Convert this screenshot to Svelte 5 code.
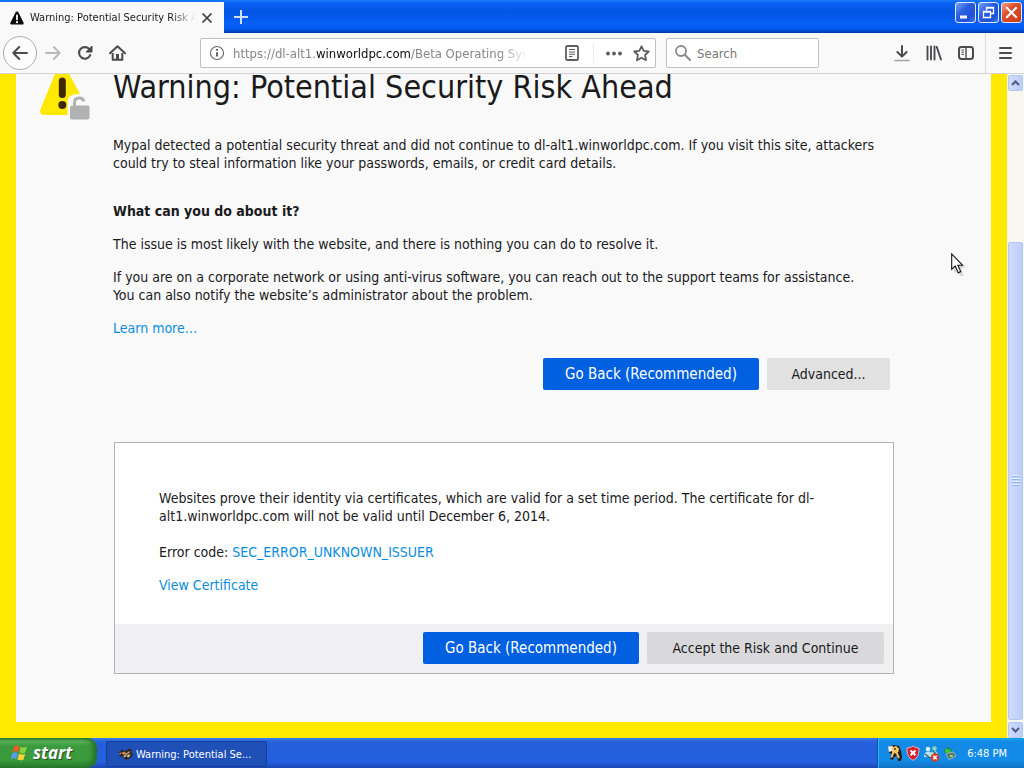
<script>
  const address = {
    before: 'https://dl-alt1.',
    domain: 'winworldpc.com',
    after: '/Beta Operating Systems'
  };
  let editing = $state(false);
  let query = $state('');
</script>

<div class="desktop">
  <header class="titlebar">
    <div class="tab">
      <svg width="14" height="14" viewBox="0 0 14 14" aria-hidden="true">
        <path d="M7 0.5C7.8 0.5 8.2 1 8.6 1.7L13.5 11.4C14 12.6 13.6 13.6 12.2 13.6H1.8C0.4 13.6 0 12.6 0.5 11.4L5.4 1.7C5.8 1 6.2 0.5 7 0.5Z" fill="#0c0c0d" />
        <path d="M7 4.4V8.4" stroke="#fff" stroke-width="1.8" stroke-linecap="round" />
        <circle cx="7" cy="11.2" r="1.1" fill="#fff" />
      </svg>
      <span class="tab-title">Warning: Potential Security Risk Ahead</span>
      <button class="tab-close" aria-label="Close tab">
        <svg width="12" height="12" viewBox="0 0 12 12"><path d="M1.5 1.5L10.5 10.5M10.5 1.5L1.5 10.5" stroke="#3c3c3e" stroke-width="1.7" /></svg>
      </button>
    </div>
    <button class="new-tab" aria-label="New tab">
      <svg width="14" height="14" viewBox="0 0 14 14"><path d="M7 0V14M0 7H14" stroke="#cfe0ff" stroke-width="2" /></svg>
    </button>
    <div class="window-buttons">
      <button class="win" aria-label="Minimize">
        <svg width="19" height="19" viewBox="0 0 19 19"><path d="M4 12.5H11V15.5H4Z" fill="#fff" /></svg>
      </button>
      <button class="win" aria-label="Restore">
        <svg width="19" height="19" viewBox="0 0 19 19"><path d="M7.5 7.5V4.5H14.5V10.5H11.5M7 5H15M4.5 8.5H11.5V14.5H4.5ZM4 9H12" fill="none" stroke="#fff" stroke-width="1.3" /></svg>
      </button>
      <button class="win close" aria-label="Close">
        <svg width="19" height="19" viewBox="0 0 19 19"><path d="M5 5L14 14M14 5L5 14" stroke="#fff" stroke-width="2.1" stroke-linecap="square" /></svg>
      </button>
    </div>
  </header>

  <nav class="toolbar">
    <button class="back" aria-label="Back">
      <svg width="16" height="14" viewBox="0 0 16 14"><path d="M7.2 1L1.3 7L7.2 13M1.5 7H15" fill="none" stroke="#4a4a4f" stroke-width="2" stroke-linecap="round" stroke-linejoin="round" /></svg>
    </button>
    <button class="tool" aria-label="Forward">
      <svg width="16" height="14" viewBox="0 0 16 14"><path d="M8.8 1L14.7 7L8.8 13M14.5 7H1" fill="none" stroke="#b9b9bb" stroke-width="1.8" stroke-linecap="round" stroke-linejoin="round" /></svg>
    </button>
    <button class="tool" aria-label="Reload">
      <svg width="16" height="16" viewBox="0 0 16 16"><path d="M13.2 10.2A5.8 5.8 0 1 1 12.6 4.5" fill="none" stroke="#4a4a4f" stroke-width="2.1" stroke-linecap="round" /><path d="M15 1V7H9Z" fill="#4a4a4f" stroke="#4a4a4f" stroke-linejoin="round" /></svg>
    </button>
    <button class="tool" aria-label="Home">
      <svg width="17" height="16" viewBox="0 0 17 16"><path d="M1 8.3L8.5 1.2L16 8.3" fill="none" stroke="#4a4a4f" stroke-width="2" stroke-linecap="round" stroke-linejoin="round" /><path d="M3.7 8V14.7H13.3V8" fill="none" stroke="#4a4a4f" stroke-width="2" stroke-linejoin="round" /><path d="M7 14.5V9H10V14.5Z" fill="#4a4a4f" /></svg>
    </button>

    <div class="field url">
      <svg width="16" height="16" viewBox="0 0 16 16" aria-hidden="true"><circle cx="8" cy="8" r="6.5" fill="none" stroke="#66666a" stroke-width="1.1" /><path d="M8 7.2V11.4" stroke="#55555a" stroke-width="1.8" /><circle cx="8" cy="4.8" r="1.1" fill="#55555a" /></svg>
      <div class="address">
        <input
          type="text"
          aria-label="Address"
          value={editing ? address.before + address.domain + address.after : ''}
          onfocus={() => (editing = true)}
          onblur={() => (editing = false)}
        />
        {#if !editing}
          <span class="address-text">{address.before}<b>{address.domain}</b>{address.after}</span>
        {/if}
      </div>
      <button class="mini reader" aria-label="Reader view">
        <svg width="14" height="16" viewBox="0 0 14 16"><rect x="1" y="1" width="12" height="14" rx="1.6" fill="none" stroke="#5d5d61" stroke-width="1.8" /><path d="M4 4.5H10M4 7H10M4 9.2H10M4 11.5H7.5" stroke="#5d5d61" stroke-width="1" /></svg>
      </button>
      <button class="mini dots" aria-label="Page actions">
        <svg width="16" height="5" viewBox="0 0 16 5"><g fill="#5d5d61"><circle cx="2" cy="2.5" r="1.9" /><circle cx="8" cy="2.5" r="1.9" /><circle cx="14" cy="2.5" r="1.9" /></g></svg>
      </button>
      <button class="mini" aria-label="Bookmark this page">
        <svg width="17" height="17" viewBox="0 0 17 17"><path d="M8.5 1.3L10.7 5.8L15.7 6.5L12.1 10L13 15.2L8.5 12.7L4 15.2L4.9 10L1.3 6.5L6.3 5.8Z" fill="none" stroke="#5d5d61" stroke-width="1.8" stroke-linejoin="round" /></svg>
      </button>
    </div>

    <label class="field search">
      <svg width="18" height="18" viewBox="0 0 18 18" aria-hidden="true"><circle cx="7" cy="7" r="5" fill="none" stroke="#89898c" stroke-width="1.8" /><path d="M10.8 10.8L16 16" stroke="#89898c" stroke-width="2" stroke-linecap="round" /></svg>
      <input type="text" placeholder="Search" aria-label="Search" bind:value={query} />
    </label>

    <div class="right-tools">
      <button class="tool" aria-label="Downloads">
        <svg width="16" height="17" viewBox="0 0 16 17"><path d="M8 1V11M3.4 7L8 11.6L12.6 7" fill="none" stroke="#4a4a4f" stroke-width="2" stroke-linecap="round" stroke-linejoin="round" /><path d="M1 15.5H15" stroke="#a4a4a7" stroke-width="1.5" stroke-linecap="round" /></svg>
      </button>
      <button class="tool" aria-label="Library">
        <svg width="16" height="16" viewBox="0 0 16 16"><path d="M1.5 1.5V14.5M5 1.5V14.5M8.5 1.5V14.5M10.8 2L15 14.5" fill="none" stroke="#4a4a4f" stroke-width="1.9" stroke-linecap="round" /></svg>
      </button>
      <button class="tool" aria-label="Sidebars">
        <svg width="16" height="14" viewBox="0 0 16 14"><rect x="1" y="1" width="14" height="12" rx="2.4" fill="none" stroke="#4a4a4f" stroke-width="2" /><path d="M8 1V13" stroke="#4a4a4f" stroke-width="1.4" /><path d="M3.3 4H6M3.3 6.2H6M3.3 8.4H6" stroke="#4a4a4f" stroke-width="1" /></svg>
      </button>
      <button class="tool menu" aria-label="Open menu">
        <svg width="13" height="12" viewBox="0 0 13 12"><path d="M1 1H12M1 6H12M1 11H12" stroke="#4a4a4f" stroke-width="2" stroke-linecap="round" /></svg>
      </button>
    </div>
  </nav>

  <div class="viewport">
    <main class="page">
      <div class="heading">
        <svg class="warning" width="54" height="47" viewBox="0 0 54 47" aria-hidden="true">
          <path d="M19 -5C22 -9 26 -9 29 -4L50 35C52 39 50 41 46 41H7C2 41 1 38 3 34Z" fill="#ffe900" />
          <path d="M29.5 47V28C29.5 23 34 20 40 20H54V47Z" fill="#f9f9fa" />
          <path d="M24.300 7V20.500" stroke="#3e2800" stroke-width="7" stroke-linecap="round" />
          <circle cx="24.300" cy="31" r="4" fill="#3e2800" />
          <path d="M36.500 32V28.500C36.500 25.500 38.500 24 41 24S45.500 25 45.500 27.500" fill="none" stroke="#b1b1b3" stroke-width="3" />
          <rect x="32" y="31.500" width="19.500" height="14" rx="2" fill="#b1b1b3" />
        </svg>
        <h1>Warning: Potential Security Risk Ahead</h1>
      </div>

      <div class="content">
        <p class="intro">Mypal detected a potential security threat and did not continue to dl-alt1.winworldpc.com. If you visit this site, attackers could try to steal information like your passwords, emails, or credit card details.</p>
        <h2>What can you do about it?</h2>
        <p>The issue is most likely with the website, and there is nothing you can do to resolve it.</p>
        <p>If you are on a corporate network or using anti-virus software, you can reach out to the support teams for assistance.<br />You can also notify the website’s administrator about the problem.</p>
        <p><a href="#learn">Learn more…</a></p>
        <div class="actions">
          <button class="btn primary">Go Back (Recommended)</button>
          <button class="btn advanced">Advanced...</button>
        </div>

        <section class="details">
          <div class="details-text">
            <p class="cert">Websites prove their identity via certificates, which are valid for a set time period. The certificate for dl-alt1.winworldpc.com will not be valid until December 6, 2014.</p>
            <p>Error code: <a href="#code">SEC_ERROR_UNKNOWN_ISSUER</a></p>
            <p><a href="#certificate">View Certificate</a></p>
          </div>
          <div class="details-actions">
            <button class="btn primary">Go Back (Recommended)</button>
            <button class="btn accept">Accept the Risk and Continue</button>
          </div>
        </section>
      </div>
    </main>

    <div class="scrollbar">
      <button class="arrow" aria-label="Scroll up">
        <svg width="9" height="6" viewBox="0 0 9 6"><path d="M1 5L4.500 1.500L8 5" fill="none" stroke="#4d6185" stroke-width="2.200" /></svg>
      </button>
      <div class="track"><div class="thumb"><i></i><i></i><i></i><i></i></div></div>
      <button class="arrow" aria-label="Scroll down">
        <svg width="9" height="6" viewBox="0 0 9 6"><path d="M1 1L4.500 4.500L8 1" fill="none" stroke="#4d6185" stroke-width="2.200" /></svg>
      </button>
    </div>
  </div>

  <footer class="taskbar">
    <button class="start">
      <svg width="19" height="18" viewBox="0 0 19 18" aria-hidden="true">
        <path d="M4 2.500C6 1 8 1.300 9.600 2.200L8.200 8C6.300 7 4.500 7 2.500 8.200Z" fill="#f0592b" />
        <path d="M10.700 2.800C12.700 3.900 14.600 3.800 17 2.600L15.400 8.600C13.300 9.800 11.200 9.500 9.300 8.600Z" fill="#8bd13f" />
        <path d="M2.200 9.300C4.200 8.100 6 8.200 7.900 9.100L6.400 15C4.600 14 2.700 14 0.700 15.200Z" fill="#5b9bf4" />
        <path d="M9 9.800C11 10.800 12.900 10.800 15.100 9.700L13.600 15.500C11.500 16.700 9.400 16.500 7.500 15.500Z" fill="#ffd23c" />
      </svg>
      <span>start</span>
    </button>
    <button class="task">
      <svg width="15" height="14" viewBox="0 0 16 14" aria-hidden="true">
        <path d="M0 5L3 4L4 2L7 4L11 2L14 1L14.500 5L16 8L12 12L8 13L5 10L1 9L3 7Z" fill="#33251e" />
        <path d="M4 5L7 4.500L9 6L13 3.500L12.500 6L9 8L5 7.500Z" fill="#b98a5c" />
        <path d="M6 8.500L10 8.500L13.500 7L12 10L9 11.500L6 10Z" fill="#e9dac4" />
        <circle cx="9" cy="10.800" r="1.300" fill="#111" />
        <path d="M1 6L4 5.500L3 7.500" fill="#d98a4e" />
      </svg>
      <span>Warning: Potential Se...</span>
    </button>
    <div class="tray">
      <svg width="16" height="18" viewBox="0 0 16 18" aria-hidden="true">
        <path d="M2 3L6 1L12 2L14 7L15 13L14 17L11 17L10 12L7 13L6 16L3 15L5 10L2 9Z" fill="#251b12" />
        <path d="M1 2.500L6 2L5 7L2 8Z" fill="#f2eee0" />
        <path d="M5 3.500L9 2L12 4.500L11.500 8L8.500 9.500L5 8.500Z" fill="#f3c267" />
        <path d="M9.500 8.500L12 14M6.500 8L4.500 13.500" stroke="#eec06c" stroke-width="2" />
        <circle cx="8" cy="5" r="1" fill="#4a3512" />
      </svg>
      <svg width="14" height="16" viewBox="0 0 14 16" aria-hidden="true">
        <path d="M7 1C9 2.500 11 3 13 3C13 9 12 12.500 7 15.300C2 12.500 1 9 1 3C3 3 5 2.500 7 1Z" fill="#d81d2c" stroke="#e9b3b5" />
        <path d="M4.600 5.500L9.400 10.300M9.400 5.500L4.600 10.300" stroke="#fff" stroke-width="2" />
      </svg>
      <svg width="17" height="17" viewBox="0 0 17 17" aria-hidden="true">
        <circle cx="5" cy="4" r="2.300" fill="#d8f0e4" /><circle cx="11.500" cy="3.500" r="2.300" fill="#8bd6c0" />
        <path d="M1 12C1 8 3 6.500 5.500 6.500S9 8 9 12ZM8 8C9 6 10.500 5.800 12 6S15 8 15 11H9Z" fill="#b9dff0" />
        <path d="M2 9L7 13M10 6L13 9" stroke="#226a83" stroke-width="1.500" />
        <circle cx="12" cy="12.500" r="4.200" fill="#d93a20" /><path d="M10.300 10.800L13.700 14.200M13.700 10.800L10.300 14.200" stroke="#fff" stroke-width="1.500" />
      </svg>
      <svg width="14" height="15" viewBox="0 0 14 15" aria-hidden="true">
        <path d="M1 5L5 1V3H8V7H5V9Z" fill="#3fc73c" stroke="#177b29" stroke-width="0.700" />
        <path d="M3 8L10 6L13 10L6 13.500Z" fill="#56686a" stroke="#b9c6c0" stroke-width="0.800" />
        <path d="M6 9.500L9 8.500L10.500 10L7.500 11.500Z" fill="#7cdf70" />
      </svg>
      <time>6:48 PM</time>
    </div>
  </footer>

  <svg class="cursor" width="18" height="26" viewBox="0 0 18 26" aria-hidden="true">
    <path d="M3 3L14 14L10 16L13 23L9 23L6 18L3 20Z" fill="#777" opacity="0.250" />
    <path d="M0.700 0.900V16.300L4.200 13L7.200 19.700L9.700 18.600L6.900 12.200H11.500Z" fill="#fff" stroke="#111" stroke-width="1.100" />
  </svg>
</div>

<style>
  :global(body) {
    margin: 0;
    overflow: hidden;
  }

  .desktop {
    display: flex;
    flex-direction: column;
    height: 100vh;
    position: relative;
    font-family: 'DejaVu Sans Condensed', 'Noto Sans', sans-serif;
    color: #1a1a1b;
  }

  button,
  input {
    font: inherit;
    color: inherit;
    border: 0;
    padding: 0;
    margin: 0;
    background: none;
  }

  svg {
    display: block;
    flex: none;
  }

  .titlebar {
    display: flex;
    height: 33px;
    flex: none;
    box-sizing: border-box;
    background: linear-gradient(#1878f8 0, #0a5ff2 4px, #0455e6 12px, #0560f6 24px, #035af0 29px, #0238a8 33px);
  }

  .tab {
    display: flex;
    align-items: center;
    width: 224px;
    margin-top: 2px;
    padding: 0 11px 0 10px;
    gap: 6px;
    box-sizing: border-box;
    background: #f9f9fa;
    font-size: 11px;
  }

  .tab-title {
    flex: 1;
    overflow: hidden;
    white-space: nowrap;
    mask-image: linear-gradient(90deg, #000 calc(100% - 24px), transparent);
  }

  .new-tab {
    width: 33px;
    display: grid;
    place-items: center;
  }

  .window-buttons {
    display: flex;
    gap: 2px;
    margin-left: auto;
    padding: 2px 2px 0 0;
  }

  .win {
    display: grid;
    place-items: center;
    width: 21px;
    height: 21px;
    border: 1px solid #dfe9fd;
    border-radius: 3px;
    background: linear-gradient(135deg, #7ba1f4, #2a5ddf 40%, #1f51d8 75%, #3f7cf0);
  }

  .win.close {
    background: linear-gradient(135deg, #f0a088, #dd4e2c 40%, #cc3b17);
  }

  .toolbar {
    display: flex;
    align-items: center;
    height: 41px;
    flex: none;
    box-sizing: border-box;
    padding: 0 3px;
    background: #f9f9fa;
    border-bottom: 1px solid #d4d4d6;
  }

  .back {
    width: 34px;
    height: 34px;
    box-sizing: border-box;
    border: 1px solid #adadb0;
    border-radius: 50%;
    background: #fdfdfe;
    display: grid;
    place-items: center;
  }

  .tool {
    width: 32px;
    height: 32px;
    display: grid;
    place-items: center;
    flex: none;
  }

  .field {
    display: flex;
    align-items: center;
    height: 30px;
    box-sizing: border-box;
    border: 1px solid #c0c0c2;
    border-radius: 2px;
    background: #fff;
    font-size: 13px;
    min-width: 0;
  }

  .url {
    flex: 441 1 0;
    margin-left: 67px;
    padding: 0 5px 0 8px;
  }

  .search {
    flex: 136 1 0;
    margin: 0 67px 0 10px;
    padding: 0 8px 0 7px;
    gap: 5px;
  }

  .address {
    display: grid;
    flex: 1;
    min-width: 0;
    margin-left: 8px;
    overflow: hidden;
    mask-image: linear-gradient(90deg, #000 calc(100% - 28px), transparent);
  }

  .address > * {
    grid-area: 1 / 1;
  }

  input {
    width: 100%;
    min-width: 0;
    outline: 0;
  }

  input::placeholder {
    color: #77777a;
    opacity: 1;
  }

  .address-text {
    pointer-events: none;
    white-space: nowrap;
    color: #858588;
  }

  .address-text b {
    font-weight: 400;
    color: #0c0c0d;
  }

  .mini {
    display: grid;
    place-items: center;
    width: 18px;
    height: 20px;
    flex: none;
  }

  .reader {
    margin: 0 12px 0 36px;
  }

  .dots {
    padding-left: 11px;
    margin-right: 10px;
    width: 29px;
    border-left: 1px solid #ececee;
    box-sizing: border-box;
  }

  .right-tools {
    display: flex;
    align-items: center;
  }

  .menu {
    width: 37px;
    height: 40px;
    border-left: 1px solid #dcdcde;
    margin-left: 3px;
    margin-right: -1px;
    padding-left: 2px;
    box-sizing: border-box;
  }

  .viewport {
    display: flex;
    flex: 1;
    min-height: 0;
  }

  .page {
    flex: 1;
    min-width: 0;
    overflow: hidden;
    border: 16px solid #ffe900;
    border-top: 0;
    background: #f9f9fa;
    font-size: 14px;
    line-height: 18px;
  }

  .heading {
    display: flex;
    gap: 21px;
    padding-left: 22px;
    align-items: flex-start;
  }

  .heading h1 {
    margin: -6px 0 0;
    font-size: 32px;
    line-height: 38px;
    font-weight: 400;
    white-space: nowrap;
  }

  .content {
    max-width: 781px;
    padding: 15px 0 0 97px;
  }

  .content p {
    margin: 0 0 15px;
  }

  .content .intro {
    margin-bottom: 30px;
  }

  h2 {
    margin: 0 0 15px;
    font-size: 14px;
    line-height: 18px;
    font-weight: 700;
  }

  a {
    color: #0a8ddf;
    text-decoration: none;
  }

  .actions,
  .details-actions {
    display: flex;
    justify-content: flex-end;
    gap: 8px;
  }

  .actions {
    padding: 6px 4px 0 0;
  }

  .btn {
    height: 32px;
    padding: 0 22px;
    border-radius: 2px;
    background: #e1e1e2;
  }

  .primary {
    min-width: 216px;
    background: #0060df;
    color: #fff;
    font-size: 15px;
  }

  .advanced {
    min-width: 123px;
  }

  .accept {
    min-width: 237px;
    background: #d9d9dc;
  }

  .details {
    margin: 52px 0 0 1px;
    border: 1px solid #b1b1b3;
    background: #fff;
  }

  .details-text {
    padding: 46px 44px 15px;
  }

  .details-text .cert {
    margin-bottom: 18px;
  }

  .details-actions {
    padding: 8px 9px 9px;
    background: #f0f0f2;
  }

  .scrollbar {
    display: flex;
    flex-direction: column;
    width: 17px;
    box-sizing: border-box;
    padding: 1px 1px 0;
    background: #f8f8f0;
  }

  .arrow,
  .thumb {
    border: 1px solid #b4c6f2;
    border-radius: 2px;
    background: linear-gradient(90deg, #cfdcfe, #bccdf9);
  }

  .arrow {
    display: grid;
    place-items: center;
    height: 16px;
    box-sizing: border-box;
    flex: none;
  }

  .track {
    flex: 1;
    display: flex;
    flex-direction: column;
    justify-content: flex-end;
    padding-bottom: 2px;
  }

  .thumb {
    height: 76%;
    box-sizing: border-box;
    display: flex;
    flex-direction: column;
    justify-content: center;
    align-items: center;
    gap: 1px;
  }

  .thumb i {
    width: 7px;
    height: 1px;
    background: #eef4fe;
    border-bottom: 1px solid #8cb0f8;
  }

  .taskbar {
    display: flex;
    height: 30px;
    flex: none;
    background: linear-gradient(#3a80ee 0, #2a65dc 3px, #245edb 8px, #2461df 24px, #1b46b4 30px);
    color: #fff;
    font-size: 11px;
  }

  .start {
    display: flex;
    align-items: center;
    gap: 4px;
    width: 97px;
    padding-left: 10px;
    box-sizing: border-box;
    border-radius: 0 10px 10px 0;
    background: linear-gradient(#2f7a31 0, #5db35a 3px, #3c9a3e 8px, #399b3a 22px, #2a7a2d 30px);
    box-shadow: inset -4px 0 5px #23702a;
    font: italic 700 17px/22px 'Open Sans', sans-serif;
    text-shadow: 1px 1px 1px #234d22;
  }

  .task {
    display: flex;
    align-items: center;
    gap: 3px;
    width: 161px;
    height: 26px;
    margin: 3px 0 0 9px;
    padding-left: 11px;
    box-sizing: border-box;
    border: 1px solid #163f9c;
    border-radius: 2px;
    background: #1e50b8;
    white-space: nowrap;
  }

  .tray {
    display: flex;
    align-items: center;
    gap: 3px;
    margin-left: auto;
    padding: 0 17px 0 9px;
    border-left: 1px solid #0d4fb5;
    box-shadow: inset 1px 0 #35b5f6;
    background: linear-gradient(#18a5ef 0, #1389e4 4px, #118ce9 22px, #1270c4 30px);
  }

  time {
    margin-left: 7px;
  }

  .cursor {
    position: absolute;
    left: 951px;
    top: 253px;
    pointer-events: none;
  }
</style>
